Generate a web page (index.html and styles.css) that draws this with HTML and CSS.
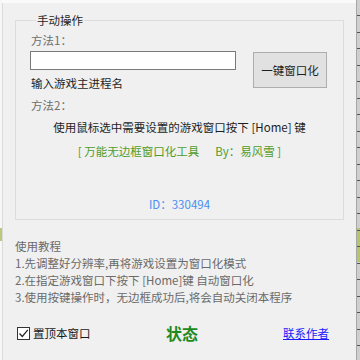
FILE: index.html
```html
<!DOCTYPE html>
<html lang="zh">
<head>
<meta charset="utf-8">
<link rel="stylesheet" href="styles.css">
</head>
<body>
<div class="screen">
  <div class="gutter"></div>
  <div class="win">
    <fieldset class="group">
      <legend class="legend">手动操作</legend>
      <div class="muted label1">方法1：</div>
      <div class="row">
        <div class="left">
          <input class="input" type="text">
          <div class="hint">输入游戏主进程名</div>
        </div>
        <button class="btn">一键窗口化</button>
      </div>
      <div class="muted label2">方法2：</div>
      <div class="center instr">使用鼠标选中需要设置的游戏窗口按下 [Home] 键</div>
      <div class="center green">[ 万能无边框窗口化工具<span class="sp"></span>By：易风雪 ]</div>
      <div class="center id">ID：330494</div>
    </fieldset>
    <div class="tut">
      <div>使用教程</div>
      <div>1.先调整好分辨率,再将游戏设置为窗口化模式</div>
      <div>2.在指定游戏窗口下按下 [Home]键 自动窗口化</div>
      <div>3.使用按键操作时，无边框成功后,将会自动关闭本程序</div>
    </div>
    <div class="bottom">
      <label class="opt"><span class="check"><svg width="11" height="11" viewBox="0 0 11 11"><path d="M1.5 5.5 L4.3 8.5 L9.8 1.8" fill="none" stroke="#222" stroke-width="1.2"/></svg></span>置顶本窗口</label>
      <div class="state">状态</div>
      <a class="link" href="#">联系作者</a>
    </div>
  </div>
  <div class="edge"></div>
</div>
</body>
</html>
```
FILE: styles.css
```css
* { box-sizing: border-box; }
html, body { margin: 0; padding: 0; }
body {
  font-family: "Noto Sans CJK SC", "Noto Sans", sans-serif;
  font-size: 11.5px;
  color: #1e1e1e;
  background: #f0f0f0;
}
.screen {
  width: 360px;
  height: 360px;
  display: flex;
  overflow: hidden;
  background: #fafafa;
}
.gutter {
  width: 2px;
  background: linear-gradient(#f7f7f7 0 228px, #b9c97a 228px 241px, #f7f7f7 241px);
}
.win {
  width: 354px;
  margin-top: 3px;
  background: #f0f0f0;
  border-left: 1px solid #dadada;
  display: flex;
  flex-direction: column;
}
.edge {
  width: 4px;
  border-left: 1px solid #a6a6a6;
  background:
    repeating-linear-gradient(to bottom, transparent 0 15.5px, #555 15.5px 16.5px),
    linear-gradient(#cfcfcf 0 228px, #b5c46f 228px 262px, #cfcfcf 262px);
}
.group {
  margin: 9px 12px 0 12px;
  padding: 4px 15px 0 14px;
  border: 1px solid #dcdcdc;
  height: 208px;
  min-width: 0;
}
.legend {
  padding: 0 1px;
  margin-left: 6px;
  line-height: 16px;
  color: #1e1e1e;
}
.muted { color: #6e6e6e; line-height: 16px; }
.label1 { margin-left: 1px; }
.row {
  display: flex;
  align-items: flex-start;
  margin-top: 3px;
}
.left { width: 206px; }
.input {
  display: block;
  width: 206px;
  height: 19px;
  border: 1px solid #7a7a7a;
  background: #fff;
  margin: 0;
  padding: 0;
}
.hint { margin-top: 5px; margin-left: 1px; line-height: 16px; }
.btn {
  margin: 1px 0 0 17px;
  width: 74px;
  height: 36px;
  background: #e1e1e1;
  border: 1px solid #adadad;
  font-family: inherit;
  font-size: 11.5px;
  color: #1e1e1e;
  padding: 0;
}
.label2 { margin-top: 6px; margin-left: 1px; }
.center { text-align: center; line-height: 16px; margin-right: -1px; }
.instr { margin-top: 6px; }
.green { margin-top: 8px; color: #4f9c2a; }
.sp { display: inline-block; width: 16px; }
.id { margin-top: 37px; color: #4a8ff0; }
.tut {
  margin: 18px 0 0 12px;
  color: #6a6a6a;
  line-height: 17px;
}
.bottom {
  display: flex;
  align-items: center;
  margin-top: 18px;
  padding: 0 27px 0 14px;
  height: 18px;
}
.opt {
  width: 149px;
  display: flex;
  align-items: center;
  color: #1a1a1a;
}
.check {
  width: 13px;
  height: 13px;
  border: 1px solid #333;
  background: #fff;
  display: flex;
  align-items: center;
  justify-content: center;
  margin-right: 3px;
}
.state {
  font-size: 16px;
  font-weight: bold;
  color: #1e8a1e;
}
.link {
  margin-left: auto;
  color: #1a1aff;
  text-decoration: underline;
}
```
